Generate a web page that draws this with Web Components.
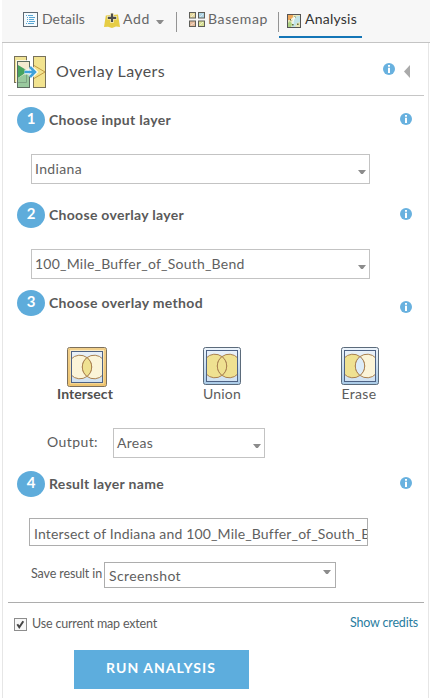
<!DOCTYPE html>
<html lang="en">
<head>
<meta charset="utf-8">
<title>Overlay Layers</title>
<style>
  html, body { margin: 0; background: #fff; }
  body { width: 430px; height: 698px; overflow: hidden; font-family: Lato, "Open Sans", sans-serif; color: #5c5c5c; }
</style>
</head>
<body>
<analysis-app></analysis-app>
<script>
const define = (name, markup, setup) => {
  const template = document.createElement('template');
  template.innerHTML = markup;
  customElements.define(name, class extends HTMLElement {
    connectedCallback() {
      if (this.shadowRoot) return;
      this.attachShadow({ mode: 'open' }).append(template.content.cloneNode(true));
      if (setup) setup(this, this.shadowRoot);
    }
  });
};

/* A single line of text whose tracking is set so that it fills the width "w". */
define('text-line', `
  <style>
    :host { display: block; white-space: nowrap; flex: none; }
    span { display: inline-block; }
  </style><span><slot></slot></span>`, (el, root) => {
  const w = +el.getAttribute('w'), span = root.querySelector('span');
  el.style.fontSize = (el.getAttribute('size') || 14) + 'px';
  el.style.lineHeight = '20px';
  el.style.width = w + 'px';
  const natural = span.getBoundingClientRect().width;
  span.style.letterSpacing = ((w - natural) / el.textContent.length) + 'px';
});

define('info-icon', `
  <style>:host { display: block; width: 12px; height: 12px; flex: none; } svg { display: block; }</style>
  <svg width="12" height="12" viewBox="0 0 12 12"><circle cx="6" cy="6" r="6" fill="#68b1df"/>
  <path d="M5 2h2v1.7H5zM5 4.7h2V10H5z" fill="#fff"/></svg>`);

define('caret-icon', `
  <style>:host { display: block; width: 8px; height: 4px; flex: none; } svg { display: block; }</style>
  <svg width="8" height="4" viewBox="0 0 8 4"><path d="M0 0h8L4.8 4H3.2z" fill="#8c8c8c"/></svg>`);

const glyphs = {
  details: `<svg width="15" height="15" viewBox="0 0 15 15"><rect x=".5" y=".5" width="14" height="14" fill="#f4fafd" stroke="#5d6973"/>
    <path d="M3 3.5h1M5 3.5h5M4 5.5h1M6 5.5h6M4 7.5h1M6 7.5h5M4 9.5h1M6 9.5h6M3 11.5h1M5 11.5h6" stroke="#58a5d3"/></svg>`,
  add: `<svg width="16" height="15" viewBox="0 0 16 15"><path d="M1.8 2.6 14 1.6l2 12.4-4-.6L8 15l-4-1.3-4 .4z" fill="#e6cd45"/>
    <path d="M8 0v9.8M3.2 4.8h9.6" stroke="#fbf3c8" stroke-width="3.6"/><path d="M8 .5v8.6M3.8 4.8h8.4" stroke="#4c4c4c" stroke-width="2.2"/></svg>`,
  basemap: `<svg width="16" height="15" viewBox="0 0 16 15"><g stroke="#5e5e58"><rect x=".5" y=".5" width="6" height="5.5" fill="#e6d9a0"/>
    <rect x="9.5" y=".5" width="6" height="5.5" fill="#add3e4"/><rect x=".5" y="9" width="6" height="5.5" fill="#e3b99a"/>
    <rect x="9.5" y="9" width="6" height="5.5" fill="#d8df93"/></g><path d="M2 5l3-3M11 5l3-3M11 13l3-3M2 13l3-2" stroke="#fff" opacity=".55"/></svg>`,
  analysis: `<svg width="14" height="14" viewBox="0 0 14 14"><rect x=".5" y=".5" width="13" height="13" fill="#e9e7ba" stroke="#555"/>
    <path d="M1 1h5v2L3 6H1z" fill="#eda75b"/><path d="M7 5l3-3h3v6l-3 1-2 4H5V9z" fill="#c3e4e7"/><path d="M1 9l2-2 2 3-1 3H1z" fill="#add184"/>
    <path d="M7 2.5h1.6v1.6H7zM3 5h1.6v1.6H3zM5 10h1.6v1.6H5zM10 9.5h1.6v1.6H10z" fill="#68733c"/><path d="M4 6l4-3-2 4 0 3" fill="none" stroke="#fff"/><rect x=".5" y=".5" width="13" height="13" fill="none" stroke="#555"/></svg>`,
  overlay: `<svg width="32" height="32" viewBox="0 0 32 32"><rect x=".5" y=".5" width="12" height="26" fill="#f0e394" stroke="#77715b"/>
    <rect x="2" y="4" width="15" height="28" fill="#fff" opacity=".75"/><rect x="3.5" y="5.5" width="12" height="26" fill="#f3ead0"/>
    <path d="M4 9l10 6-10 7z" fill="#47a35f"/><path d="M4 22l7-4h4.5v13H4z" fill="#99c99e"/>
    <rect x="3.5" y="5.5" width="12" height="26" fill="none" stroke="#5c6b60"/><path d="M4 26.5h8.5V18" stroke="#7da383" fill="none"/>
    <rect x="19.5" y=".5" width="12" height="31" fill="#f2e38f" stroke="#77715b"/><path d="M20 9.5l11 6.5-11 6.5" fill="none" stroke="#c39a43"/>
    <path d="M10.5 16h10M16 11l5 5-5 5" fill="none" stroke="#fff" stroke-width="5" opacity=".85"/>
    <path d="M10.5 16h10M16 11l5 5-5 5" fill="none" stroke="#3fa2dc" stroke-width="2.5"/></svg>`
};
define('app-glyph', `<style>:host { display: block; flex: none; }</style>`, (el, root) => {
  root.innerHTML += glyphs[el.getAttribute('name')];
  root.querySelector('svg').style.display = 'block';
});

/* Two overlapping circles; the fills tell which parts an operation keeps. */
define('venn-icon', `<style>:host { display: block; flex: none; } svg { display: block; }</style>`, (el, root) => {
  const op = el.getAttribute('op'), on = '#efe191', off = '#fbf4d8';
  const [l, m, r] = { intersect: [off, on, off], union: [on, on, on], erase: [on, '#dcecf9', off] }[op];
  const sel = op === 'intersect', s = sel ? 40 : 38, c = s / 2;
  const i = sel ? 4.5 : 3.5;
  const side = `M${c} ${c-9.4}A11.8 11.8 0 1 0 ${c} ${c+9.4}A11.8 11.8 0 0 1 ${c} ${c-9.4}Z`;
  const lens = `M${c} ${c-9.4}A11.8 11.8 0 0 1 ${c} ${c+9.4}A11.8 11.8 0 0 1 ${c} ${c-9.4}Z`;
  root.innerHTML += `<svg width="${s}" height="${s}" viewBox="0 0 ${s} ${s}">
    <defs><linearGradient id="a" x1="0" y1="0" x2="0" y2="1"><stop offset="0" stop-color="${sel ? '#fbecc6' : '#edf4fb'}"/><stop offset="1" stop-color="${sel ? '#f3d490' : '#a9cae6'}"/></linearGradient>
    <linearGradient id="b" x1="0" y1="0" x2="0" y2="1"><stop offset="0" stop-color="#e9f1f9"/><stop offset="1" stop-color="#d0e2f2"/></linearGradient>
    <clipPath id="c"><rect x="${i}" y="${i}" width="${s-2*i}" height="${s-2*i}"/></clipPath></defs>
    <rect x=".5" y=".5" width="${s-1}" height="${s-1}" rx="2" fill="url(#a)" stroke="${sel ? '#7d705b' : '#5b6b7b'}"/>
    ${sel ? '<rect x="2" y="2" width="36" height="36" fill="none" stroke="#e8b452"/>' : ''}
    <rect x="${i}" y="${i}" width="${s-2*i}" height="${s-2*i}" fill="url(#b)"/>
    <g stroke="#a98050" clip-path="url(#c)"><path d="${side}" fill="${l}"/>
    <path d="${side}" fill="${r}" transform="matrix(-1 0 0 1 ${s} 0)"/><path d="${lens}" fill="${m}"/></g>
    <rect x="${i}" y="${i}" width="${s-2*i}" height="${s-2*i}" fill="none" stroke="#4e6284"/></svg>`;
});

define('tool-bar', `
  <style>
    :host { display: flex; box-sizing: border-box; height: 43px; margin-left: 2px; padding-left: 21px; background: #f7f7f7; border-bottom: 1px solid #c4c4c4; color: #666; align-items: flex-start; }
    text-line { margin-top: 9px; }
    app-glyph { margin-top: 12px; }
    caret-icon { margin: 20px 12px 0 6px; }
    i { width: 1px; height: 20px; margin-top: 12px; background: #949494; }
    .active { display: flex; box-sizing: border-box; width: 83px; height: 38px; padding-left: 8px; gap: 4px; border-bottom: 2px solid #1475b6; color: #333; }
    .active app-glyph { margin-top: 14px; }
  </style>
  <app-glyph name="details"></app-glyph><text-line w="43" style="margin-left:4px">Details</text-line>
  <app-glyph name="add" style="margin-left:19px;margin-top:13px"></app-glyph><text-line w="27" style="margin-left:3px">Add</text-line>
  <caret-icon></caret-icon><i></i>
  <app-glyph name="basemap" style="margin-left:12px"></app-glyph><text-line w="60" style="margin-left:3px">Basemap</text-line>
  <i style="margin-left:10px"></i>
  <div class="active"><app-glyph name="analysis"></app-glyph><text-line w="52">Analysis</text-line></div>`);

define('panel-header', `
  <style>
    :host { display: flex; box-sizing: border-box; height: 53px; margin: 0 4px 0 5px; padding: 13px 14px 0 6px; border-bottom: 1px solid #c6c6c6; }
    text-line { margin: 5px 0 0 10px; color: #505050; }
    info-icon { margin: 7px 9px 0 auto; }
    svg { margin-top: 9px; }
  </style>
  <app-glyph name="overlay"></app-glyph><text-line size="16" w="109">Overlay Layers</text-line>
  <info-icon></info-icon><svg width="6" height="13" viewBox="0 0 6 13"><path d="M6 0v13L0 6.5z" fill="#aaa"/></svg>`);

define('step-title', `
  <style>
    :host { display: flex; height: 26px; padding: 0 16px 0 14px; }
    b { width: 28px; height: 26px; border-radius: 50%; background: #5eacdb; color: #fff; font: 700 15px/23px Lato, sans-serif; text-align: center; }
    info-icon { margin: var(--info-top, 6px) 0 0 auto; }
  </style>
  <b></b><slot></slot><info-icon></info-icon>`, (el, root) => {
  root.querySelector('b').textContent = el.getAttribute('n');
});

define('select-field', `
  <style>
    :host { display: flex; box-sizing: border-box; justify-content: space-between; border: 1px solid #c3c3c3; background: #fff; padding: 4px 3px 0 3px; height: 30px; overflow: hidden; }
    caret-icon { margin-top: var(--caret-top, 11px); }
  </style>
  <slot></slot><caret-icon></caret-icon>`);

define('method-option', `
  <style>:host { display: flex; flex-direction: column; align-items: center; height: 60px; } div { height: 38px; }</style>
  <div></div><slot></slot>`, (el, root) => {
  root.querySelector('div').innerHTML = `<venn-icon op="${el.getAttribute('op')}"></venn-icon>`;
});

define('check-box', `
  <style>:host { display: flex; gap: 5px; } svg { display: block; margin-top: 4px; }</style>
  <svg width="13" height="13" viewBox="0 0 13 13"><rect x=".5" y=".5" width="12" height="12" fill="#f7f7f7" stroke="#8d8d8d"/>
  <path d="M3.3 6.2l2 3 4-6" fill="none" stroke="#444" stroke-width="2"/></svg><slot></slot>`);

define('run-button', `
  <style>:host { display: flex; box-sizing: border-box; justify-content: center; width: 175px; height: 39px; padding: 8px 1px 0 0; background: #5daddd; color: #fff; font-weight: 700; }</style><slot></slot>`);

define('analysis-app', `
  <style>
    :host { display: block; height: 698px; }
    main { box-sizing: border-box; height: 655px; width: 427px; margin-left: 2px; border: solid #e6e6e6; border-width: 0 1px; }
    step-title text-line { margin: 3px 0 0 4px; font-weight: 700; color: #5a5a5a; }
    select-field, .input { color: #5f5f5f; }
    .wide { width: 339px; margin-left: 28px; }
    .methods { display: flex; height: 60px; margin: 31px 0 0 54px; }
    .methods text-line { margin-top: -1px; }
    method-option[op=intersect] text-line { font-weight: 700; color: #505050; }
    .row { display: flex; }
    .input { box-sizing: border-box; width: 339px; height: 28px; margin: 21px 0 0 26px; padding: 5px 0 0 4px; border: 1px solid #adadad; overflow: hidden; }
    .save { margin: 16px 0 0 28px; }
    .save select-field { width: 232px; height: 26px; border-color: #adadad; --caret-top: 3px; padding: 4px 4px 0 4px; }
    .save select-field text-line { margin-top: -1px; }
    footer { margin: 14px 4px 0 5px; border-top: 1px solid #adadad; }
    footer .row { justify-content: space-between; padding: 11px 6px 0 6px; height: 47px; box-sizing: border-box; }
    .credits { color: #2a7d9f; margin-top: -1px; }
    run-button { margin-left: 66px; }
  </style>
  <tool-bar></tool-bar>
  <main>
    <panel-header></panel-header>
    <step-title n="1" style="margin-top:11px"><text-line w="122">Choose input layer</text-line></step-title>
    <select-field class="wide" style="margin-top:21px"><text-line w="47">Indiana</text-line></select-field>
    <step-title n="2" style="margin-top:18px"><text-line w="135">Choose overlay layer</text-line></step-title>
    <select-field class="wide" style="margin-top:21px"><text-line w="209">100_Mile_Buffer_of_South_Bend</text-line></select-field>
    <step-title n="3" style="margin-top:11px;--info-top:11px"><text-line w="154">Choose overlay method</text-line></step-title>
    <div class="methods">
      <method-option op="intersect"><text-line w="56" style="margin:-1px 4px 0 0">Intersect</text-line></method-option>
      <method-option op="union" style="margin-left:86px"><text-line w="38">Union</text-line></method-option>
      <method-option op="erase" style="margin-left:100px"><text-line w="35" style="margin-right:2px">Erase</text-line></method-option>
    </div>
    <div class="row" style="margin:21px 0 0 44px;gap:15px"><text-line w="51" style="margin-top:4px">Output:</text-line>
      <select-field style="width:152px"><text-line w="36">Areas</text-line></select-field></div>
    <step-title n="4" style="margin-top:13px"><text-line w="115">Result layer name</text-line></step-title>
    <div class="input"><text-line w="336">Intersect of Indiana and 100_Mile_Buffer_of_South_B</text-line></div>
    <div class="row save"><text-line size="12.5" w="71" style="margin:2px 2px 0 0">Save result in</text-line>
      <select-field><text-line w="72">Screenshot</text-line></select-field></div>
    <footer>
      <div class="row"><check-box><text-line size="12.5" w="125">Use current map extent</text-line></check-box>
        <text-line class="credits" size="12.5" w="68">Show credits</text-line></div>
      <run-button><text-line w="110">RUN ANALYSIS</text-line></run-button>
    </footer>
  </main>`);
</script>
</body>
</html>
